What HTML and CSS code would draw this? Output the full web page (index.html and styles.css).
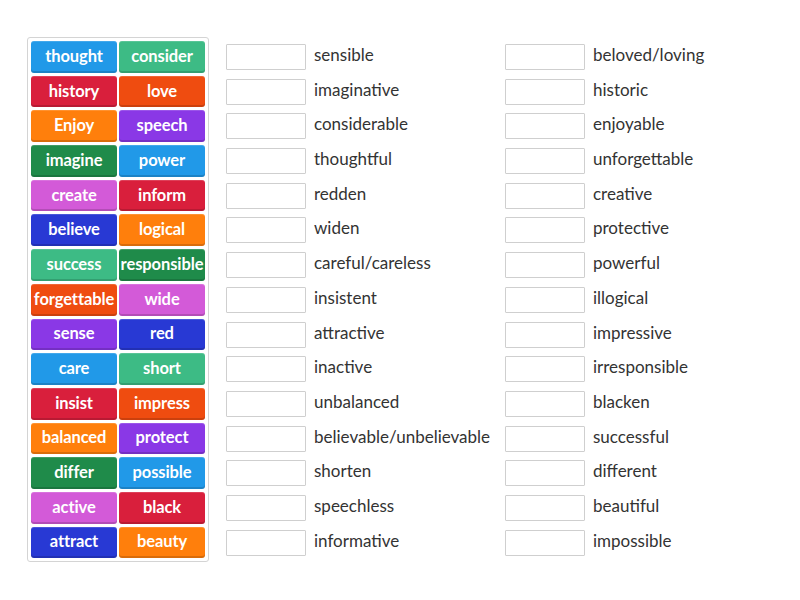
FILE: index.html
```html
<!DOCTYPE html>
<html>
<head>
<meta charset="utf-8">
<link rel="stylesheet" href="styles.css">
</head>
<body>
<div class="page">
  <div class="tiles">
    <div class="tile blue">thought</div><div class="tile teal">consider</div>
    <div class="tile red">history</div><div class="tile orangered">love</div>
    <div class="tile orange">Enjoy</div><div class="tile purple">speech</div>
    <div class="tile green">imagine</div><div class="tile blue">power</div>
    <div class="tile pink">create</div><div class="tile red">inform</div>
    <div class="tile navy">believe</div><div class="tile orange">logical</div>
    <div class="tile teal">success</div><div class="tile green">responsible</div>
    <div class="tile orangered">forgettable</div><div class="tile pink">wide</div>
    <div class="tile purple">sense</div><div class="tile navy">red</div>
    <div class="tile blue">care</div><div class="tile teal">short</div>
    <div class="tile red">insist</div><div class="tile orangered">impress</div>
    <div class="tile orange">balanced</div><div class="tile purple">protect</div>
    <div class="tile green">differ</div><div class="tile blue">possible</div>
    <div class="tile pink">active</div><div class="tile red">black</div>
    <div class="tile navy">attract</div><div class="tile orange">beauty</div>
  </div>
  <div class="answers">
    <div class="col">
      <div class="row"><span class="box"></span><span class="label">sensible</span></div>
      <div class="row"><span class="box"></span><span class="label">imaginative</span></div>
      <div class="row"><span class="box"></span><span class="label">considerable</span></div>
      <div class="row"><span class="box"></span><span class="label">thoughtful</span></div>
      <div class="row"><span class="box"></span><span class="label">redden</span></div>
      <div class="row"><span class="box"></span><span class="label">widen</span></div>
      <div class="row"><span class="box"></span><span class="label">careful/careless</span></div>
      <div class="row"><span class="box"></span><span class="label">insistent</span></div>
      <div class="row"><span class="box"></span><span class="label">attractive</span></div>
      <div class="row"><span class="box"></span><span class="label">inactive</span></div>
      <div class="row"><span class="box"></span><span class="label">unbalanced</span></div>
      <div class="row"><span class="box"></span><span class="label">believable/unbelievable</span></div>
      <div class="row"><span class="box"></span><span class="label">shorten</span></div>
      <div class="row"><span class="box"></span><span class="label">speechless</span></div>
      <div class="row"><span class="box"></span><span class="label">informative</span></div>
    </div>
    <div class="col">
      <div class="row"><span class="box"></span><span class="label">beloved/loving</span></div>
      <div class="row"><span class="box"></span><span class="label">historic</span></div>
      <div class="row"><span class="box"></span><span class="label">enjoyable</span></div>
      <div class="row"><span class="box"></span><span class="label">unforgettable</span></div>
      <div class="row"><span class="box"></span><span class="label">creative</span></div>
      <div class="row"><span class="box"></span><span class="label">protective</span></div>
      <div class="row"><span class="box"></span><span class="label">powerful</span></div>
      <div class="row"><span class="box"></span><span class="label">illogical</span></div>
      <div class="row"><span class="box"></span><span class="label">impressive</span></div>
      <div class="row"><span class="box"></span><span class="label">irresponsible</span></div>
      <div class="row"><span class="box"></span><span class="label">blacken</span></div>
      <div class="row"><span class="box"></span><span class="label">successful</span></div>
      <div class="row"><span class="box"></span><span class="label">different</span></div>
      <div class="row"><span class="box"></span><span class="label">beautiful</span></div>
      <div class="row"><span class="box"></span><span class="label">impossible</span></div>
    </div>
  </div>
</div>
</body>
</html>
```
FILE: styles.css
```css
html, body {
  margin: 0;
  padding: 0;
  background: #ffffff;
}
.page {
  display: flex;
  align-items: flex-start;
  padding: 37px 0 0 27px;
  font-family: Lato, "Open Sans", sans-serif;
}
.tiles {
  display: grid;
  grid-template-columns: 86px 86px;
  grid-auto-rows: 31.7px;
  column-gap: 2px;
  row-gap: 3px;
  padding: 3px;
  border: 1px solid #d4d4d4;
  border-radius: 3px;
}
.tile {
  display: flex;
  align-items: center;
  justify-content: center;
  color: #ffffff;
  font-weight: 700;
  font-size: 16.5px;
  padding-bottom: 2px;
  box-sizing: border-box;
  border-radius: 3px;
  box-shadow: inset 0 -2px 0 rgba(0, 0, 0, 0.15), inset 0 1px 0 rgba(255, 255, 255, 0.15);
  white-space: nowrap;
  overflow: hidden;
  letter-spacing: -0.1px;
}
.blue { background: #2199e8; }
.teal { background: #3dbb85; }
.green { background: #1f8b4a; }
.red { background: #d91f3c; }
.orangered { background: #ef4c10; }
.orange { background: #ff7f0c; }
.purple { background: #8a38e6; }
.pink { background: #d35ad8; }
.navy { background: #2839d4; }

.answers {
  display: flex;
  margin-left: 17px;
  padding-top: 7px;
}
.col {
  display: grid;
  grid-auto-rows: 26px;
  row-gap: 8.7px;
  width: 279px;
}
.row {
  display: flex;
  align-items: center;
}
.box {
  width: 78px;
  height: 24px;
  border: 1px solid #cfcfcf;
  border-radius: 1px;
  flex: none;
}
.label {
  margin-left: 8px;
  font-size: 17px;
  color: #333333;
  padding-bottom: 5px;
}
```
